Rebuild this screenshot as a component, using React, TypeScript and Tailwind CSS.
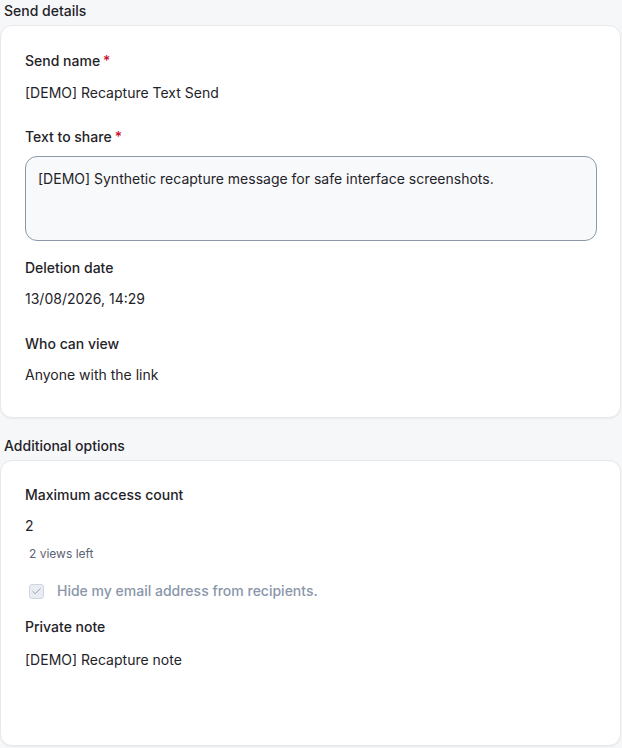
import { Check } from "lucide-react";

function Label({ text, required }: { text: string; required?: boolean }) {
  return (
    <div className="flex h-5 items-center text-sm font-medium leading-5 text-[#1f2328]">
      {text}
      {required && <span className="ml-[3px] text-[#c8102e]">*</span>}
    </div>
  );
}

function Value({ text }: { text: string }) {
  return <div className="h-5 text-sm leading-5 text-[#1f2328]">{text}</div>;
}

export default function App() {
  return (
    <div
      className="min-h-[748px] w-[622px] bg-[#f6f7f9] pt-[1px]"
      style={{ fontFamily: "Inter, 'Noto Sans', sans-serif" }}
    >
      <h2 className="h-5 pl-[4px] text-sm font-medium leading-5 text-[#1f2328]">Send details</h2>

      <section className="mt-[4px] mr-[1px] h-[393px] rounded-xl border border-[#e6e8ec] bg-white px-[24px] pt-[25px] shadow-[0_1px_2px_rgba(0,0,0,0.05)]">
        <Label text="Send name" required />
        <div className="mt-[12px]">
          <Value text="[DEMO] Recapture Text Send" />
        </div>

        <div className="mt-[24px]">
          <Label text="Text to share" required />
        </div>
        <div className="mt-[9px] h-[85px] w-[572px] rounded-xl border border-[#8a98aa] bg-[#f8f9fb] px-[12px] pt-[12px] text-sm leading-5 text-[#1f2328]">
          [DEMO] Synthetic recapture message for safe interface screenshots.
        </div>

        <div className="mt-[17px]">
          <Label text="Deletion date" />
        </div>
        <div className="mt-[11px]">
          <Value text="13/08/2026, 14:29" />
        </div>

        <div className="mt-[25px]">
          <Label text="Who can view" />
        </div>
        <div className="mt-[11px]">
          <Value text="Anyone with the link" />
        </div>
      </section>

      <h2 className="mt-[18px] h-5 pl-[4px] text-sm font-medium leading-5 text-[#1f2328]">
        Additional options
      </h2>

      <section className="mt-[4px] mr-[1px] h-[286px] rounded-xl border border-[#e6e8ec] bg-white px-[24px] pt-[24px] shadow-[0_1px_2px_rgba(0,0,0,0.05)]">
        <Label text="Maximum access count" />
        <div className="mt-[11px]">
          <Value text="2" />
        </div>
        <div className="mt-[10px] h-4 pl-[4px] text-xs leading-4 text-[#5b6373]">2 views left</div>

        <div className="mt-[19px] flex h-5 items-center gap-[13px] pl-[4px]">
          <span className="flex h-[15px] w-[15px] items-center justify-center rounded-[3px] border border-[#cfd6e0] bg-[#e9edf3]">
            <Check className="h-[11px] w-[11px] text-[#8a96aa]" strokeWidth={2} />
          </span>
          <span className="text-sm font-medium leading-5 text-[#8a96aa]">
            Hide my email address from recipients.
          </span>
        </div>

        <div className="mt-[16px]">
          <Label text="Private note" />
        </div>
        <div className="mt-[13px]">
          <Value text="[DEMO] Recapture note" />
        </div>
      </section>
    </div>
  );
}
